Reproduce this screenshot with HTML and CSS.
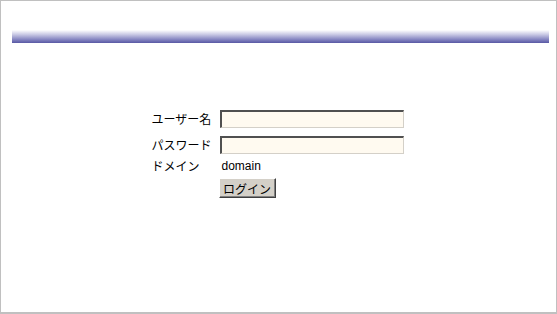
FILE: index.html
```html
<!DOCTYPE html>
<html lang="ja">
<head>
  <meta charset="utf-8" />
  <title>ログイン</title>
  <link rel="stylesheet" href="styles.css">
</head>
<body>
  <div class="frame">
    <div class="bar"></div>

    <form class="login">
      <div class="row">
        <label for="user">ユーザー名</label>
        <input type="text" id="user" name="user" />
      </div>
      <div class="row row-pass">
        <label for="pass">パスワード</label>
        <input type="password" id="pass" name="pass" />
      </div>
      <div class="row row-text">
        <span class="label">ドメイン</span>
        <span class="value">domain</span>
      </div>
      <div class="row row-button">
        <span class="label"></span>
        <button type="button">ログイン</button>
      </div>
    </form>
  </div>
</body>
</html>
```

FILE: styles.css
```css
html, body {
  margin: 0;
  padding: 0;
  background: #fff;
}

body {
  font-family: "Liberation Sans", "Noto Sans CJK JP", sans-serif;
  font-size: 12px;
  color: #000;
}

.frame {
  width: 557px;
  height: 314px;
  box-sizing: border-box;
  border: 1px solid #c0c0c0;
  border-bottom-width: 2px;
  padding: 29px 7px 0 11px;
}

.bar {
  height: 13px;
  background: linear-gradient(to bottom, #ffffff 0%, #c8c8e4 35%, #8a8ac4 70%, #5858a4 100%);
}

.login {
  width: 252px;
  margin: 67px auto 0;
  position: relative;
  left: -3px;
}

.row {
  display: flex;
  align-items: center;
  height: 18px;
  margin-bottom: 8px;
}

.row-pass {
  margin-bottom: 5px;
}

.row-text {
  height: 14px;
  margin-bottom: 5px;
}

.row-button {
  height: 20px;
}

.row label, .row .label {
  width: 67px;
  flex: none;
  font-family: "Noto Sans CJK JP", sans-serif;
  font-size: 12px;
  line-height: 14px;
}

.row .value {
  padding-left: 3px;
}

input {
  width: 185px;
  height: 18px;
  box-sizing: border-box;
  margin: 0 0 0 1px;
  padding: 0 2px;
  background: #fffaf0;
  border-style: solid;
  border-width: 2px 1px 1px 2px;
  border-color: #505050 #d4d0c8 #d4d0c8 #505050;
  font-size: 12px;
  outline: none;
}

button {
  width: 57px;
  height: 20px;
  margin: 0;
  padding: 0;
  background: #d4d0c8;
  border-style: solid;
  border-width: 1px;
  border-color: #ffffff #404040 #404040 #ffffff;
  box-shadow: inset -1px -1px #808080;
  font-family: "Noto Sans CJK JP", sans-serif;
  font-size: 12px;
  color: #000;
}
```
